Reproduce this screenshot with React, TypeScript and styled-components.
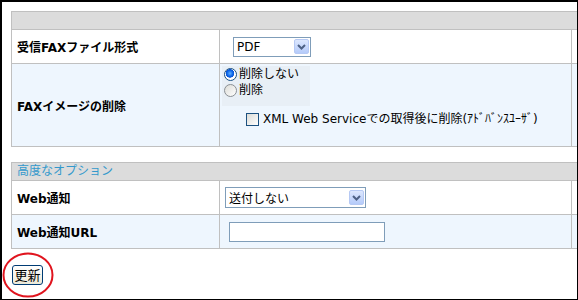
import styled, {createGlobalStyle} from 'styled-components';

const GlobalStyle = createGlobalStyle`
  html, body {
    margin: 0;
    background: #fff;
  }
`;

const FONT = `"DejaVu Sans", "Noto Sans CJK JP", sans-serif`;
const LINE = '#c0c0c0';
const ALT_BG = '#eef6fe';

const Frame = styled.div`
  box-sizing: border-box;
  width: 578px;
  height: 300px;
  border-top: 2px solid #000;
  border-left: 2px solid #000;
  border-right: 1px solid #000;
  border-bottom: 1px solid #000;
  padding: 9px 0 0 9px;
  overflow: hidden;
  font-family: ${FONT};
  font-size: 12px;
  color: #000;
`;

const Table = styled.div<{$mt?: number}>`
  display: grid;
  grid-template-columns: 208px 352px 60px;
  width: max-content;
  margin-top: ${p => p.$mt ?? 0}px;
  border-left: 1px solid ${LINE};
  border-top: 1px solid ${LINE};
`;

const HeaderCell = styled.div`
  grid-column: 1 / -1;
  height: 17px;
  line-height: 17px;
  padding-left: 5px;
  background: #dcdcdc;
  border-right: 1px solid ${LINE};
  border-bottom: 1px solid ${LINE};
  color: #3399cc;
`;

const Cell = styled.div<{$h: number; $alt?: boolean}>`
  box-sizing: content-box;
  height: ${p => p.$h}px;
  background: ${p => (p.$alt ? ALT_BG : '#fff')};
  border-right: 1px solid ${LINE};
  border-bottom: 1px solid ${LINE};
  display: flex;
  align-items: center;
`;

const LabelCell = styled(Cell)`
  padding-left: 5px;
  width: 202px;
  font-weight: bold;
`;

const ValueCell = styled(Cell)<{$pl?: number}>`
  padding-left: ${p => p.$pl ?? 0}px;
`;

const StackCell = styled(Cell)`
  flex-direction: column;
  align-items: flex-start;
`;

const SelectBox = styled.div<{$w: number; $h: number}>`
  box-sizing: border-box;
  width: ${p => p.$w}px;
  height: ${p => p.$h}px;
  border: 1px solid #7f9db9;
  background: #fff;
  display: flex;
  align-items: center;
  justify-content: space-between;
  padding-left: 3px;
  padding-right: 1px;
`;

const DropButton = styled.span`
  box-sizing: border-box;
  width: 15px;
  height: 15px;
  border: 1px solid #b6c9f4;
  border-radius: 2px;
  background: linear-gradient(#dce7fe, #b5cbfa);
  display: flex;
  align-items: center;
  justify-content: center;
`;

const TextInput = styled.div`
  box-sizing: border-box;
  width: 156px;
  height: 20px;
  border: 1px solid #7f9db9;
  background: #fff;
  margin-left: 9px;
`;

const RadioGroup = styled.div`
  box-sizing: border-box;
  width: 88px;
  height: 40px;
  margin: 2px 0 0 2px;
  padding: 2px 0 0 2px;
  background: #e8eff6;
  display: flex;
  flex-direction: column;
  gap: 3px;
`;

const OptionLine = styled.div`
  display: flex;
  align-items: center;
  gap: 2px;
  height: 13px;
  line-height: 13px;
  white-space: nowrap;
`;

const Radio = styled.span<{$checked?: boolean}>`
  box-sizing: border-box;
  width: 13px;
  height: 13px;
  border-radius: 50%;
  border: 1px solid ${p => (p.$checked ? '#1c5180' : '#8a8f94')};
  background: ${p =>
    p.$checked
      ? 'radial-gradient(circle at 45% 40%, #5fb0ff 0, #0a64e8 3px, #0a55d6 4px, #fff 4.5px)'
      : 'linear-gradient(135deg, #dcdcd7, #fff)'};
  flex-shrink: 0;
`;

const CheckLine = styled(OptionLine)`
  margin: 7px 0 0 26px;
  gap: 4px;
`;

const Checkbox = styled.span`
  box-sizing: border-box;
  width: 13px;
  height: 13px;
  border: 1px solid #1c5180;
  background: linear-gradient(135deg, #dcdcd7, #fff);
  flex-shrink: 0;
`;

const ButtonWrap = styled.div`
  position: relative;
  width: 31px;
  margin: 16px 0 0 1px;
`;

const UpdateButton = styled.button`
  box-sizing: border-box;
  width: 31px;
  height: 20px;
  padding: 0;
  border: 1px solid #003c74;
  border-radius: 3px;
  background: linear-gradient(#ffffff, #ece9d8);
  font-family: "Noto Sans CJK JP", sans-serif;
  font-size: 13px;
  line-height: 18px;
  letter-spacing: 0;
  color: #000;
`;

const Marker = styled.svg`
  position: absolute;
  left: -10px;
  top: -13px;
  pointer-events: none;
`;

const Chevron = () => (
  <svg width="9" height="6" viewBox="0 0 9 6">
    <path d="M1 1 L4.5 4.5 L8 1" fill="none" stroke="#4d6185" strokeWidth="2" />
  </svg>
);

const App = () => (
  <>
    <GlobalStyle />
    <Frame>
      <Table>
        <HeaderCell />
        <LabelCell $h={33}>受信FAXファイル形式</LabelCell>
        <ValueCell $h={33} $pl={13}>
          <SelectBox $w={78} $h={20}>
            PDF
            <DropButton>
              <Chevron />
            </DropButton>
          </SelectBox>
        </ValueCell>
        <Cell $h={33} />

        <LabelCell $h={82} $alt>FAXイメージの削除</LabelCell>
        <StackCell $h={82} $alt>
          <RadioGroup>
            <OptionLine>
              <Radio $checked />
              削除しない
            </OptionLine>
            <OptionLine>
              <Radio />
              削除
            </OptionLine>
          </RadioGroup>
          <CheckLine>
            <Checkbox />
            XML Web Serviceでの取得後に削除(ｱﾄﾞﾊﾞﾝｽﾕｰｻﾞ)
          </CheckLine>
        </StackCell>
        <Cell $h={82} $alt />
      </Table>

      <Table $mt={15}>
        <HeaderCell>高度なオプション</HeaderCell>
        <LabelCell $h={33}>Web通知</LabelCell>
        <ValueCell $h={33} $pl={5}>
          <SelectBox $w={141} $h={21}>
            送付しない
            <DropButton>
              <Chevron />
            </DropButton>
          </SelectBox>
        </ValueCell>
        <Cell $h={33} />

        <LabelCell $h={33} $alt>Web通知URL</LabelCell>
        <ValueCell $h={33} $alt>
          <TextInput />
        </ValueCell>
        <Cell $h={33} $alt />
      </Table>

      <ButtonWrap>
        <UpdateButton>更新</UpdateButton>
        <Marker width="52" height="46" viewBox="0 0 52 46">
          <ellipse cx="26" cy="23" rx="24.5" ry="21.5" fill="none" stroke="#e0141e" strokeWidth="2" />
        </Marker>
      </ButtonWrap>
    </Frame>
  </>
);

export default App;
